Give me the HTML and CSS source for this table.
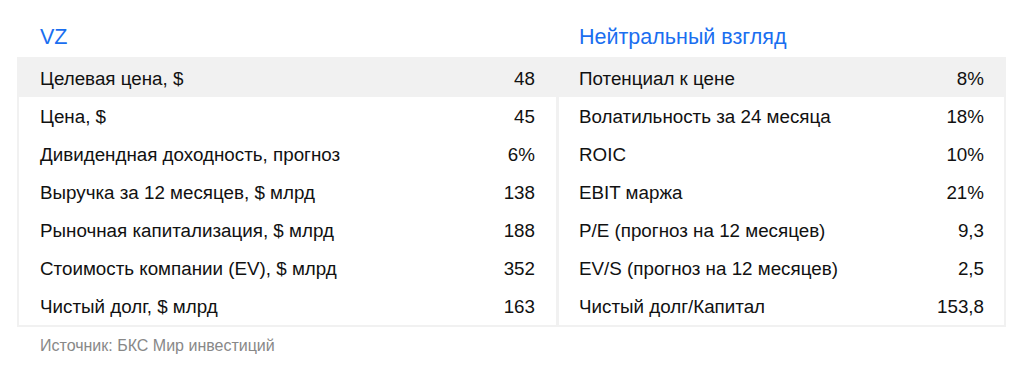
FILE: index.html
```html
<!DOCTYPE html>
<html lang="ru">
<head>
<meta charset="utf-8">
<link rel="stylesheet" href="styles.css">
</head>
<body>
<div class="page">
  <div class="heads">
    <div class="head">VZ</div>
    <div class="head">Нейтральный взгляд</div>
  </div>
  <div class="table">
    <div class="col">
      <div class="row top"><span>Целевая цена, $</span><span>48</span></div>
      <div class="body">
        <div class="row"><span>Цена, $</span><span>45</span></div>
        <div class="row"><span>Дивидендная доходность, прогноз</span><span>6%</span></div>
        <div class="row"><span>Выручка за 12 месяцев, $ млрд</span><span>138</span></div>
        <div class="row"><span>Рыночная капитализация, $ млрд</span><span>188</span></div>
        <div class="row"><span>Стоимость компании (EV), $ млрд</span><span>352</span></div>
        <div class="row"><span>Чистый долг, $ млрд</span><span>163</span></div>
      </div>
    </div>
    <div class="col">
      <div class="row top"><span>Потенциал к цене</span><span>8%</span></div>
      <div class="body">
        <div class="row"><span>Волатильность за 24 месяца</span><span>18%</span></div>
        <div class="row"><span>ROIC</span><span>10%</span></div>
        <div class="row"><span>EBIT маржа</span><span>21%</span></div>
        <div class="row"><span>P/E (прогноз на 12 месяцев)</span><span>9,3</span></div>
        <div class="row"><span>EV/S (прогноз на 12 месяцев)</span><span>2,5</span></div>
        <div class="row"><span>Чистый долг/Капитал</span><span>153,8</span></div>
      </div>
    </div>
  </div>
  <div class="source">Источник: БКС Мир инвестиций</div>
</div>
</body>
</html>
```
FILE: styles.css
```css
* { box-sizing: border-box; }
html, body { margin: 0; padding: 0; background: #fff; }
body { font-family: "Liberation Sans", Arial, sans-serif; color: #111; }
.page { width: 1024px; height: 372px; padding: 0 18px 0 17px; }
.heads { display: grid; grid-template-columns: 537px 1fr; gap: 3px; padding: 24px 2px 0; height: 57px; width: 989px; }
.head { color: #1a6ef0; font-size: 21.5px; padding-left: 21px; line-height: 26px; }
.head + .head { padding-left: 20px; }
.table { display: grid; grid-template-columns: 537px 1fr; gap: 3px; background: #f1f1f1; padding: 2px; width: 989px; }
.col { display: flex; flex-direction: column; }
.row { display: flex; justify-content: space-between; align-items: center; height: 38px; font-size: 18.8px; padding: 1px 21px 0 21px; }
.row.top { background: #f1f1f1; }
.body { background: #fff; }
.col + .col .row { padding-left: 20px; padding-right: 20px; }
.source { color: #888; font-size: 16px; padding: 10px 0 0 23px; }
```
